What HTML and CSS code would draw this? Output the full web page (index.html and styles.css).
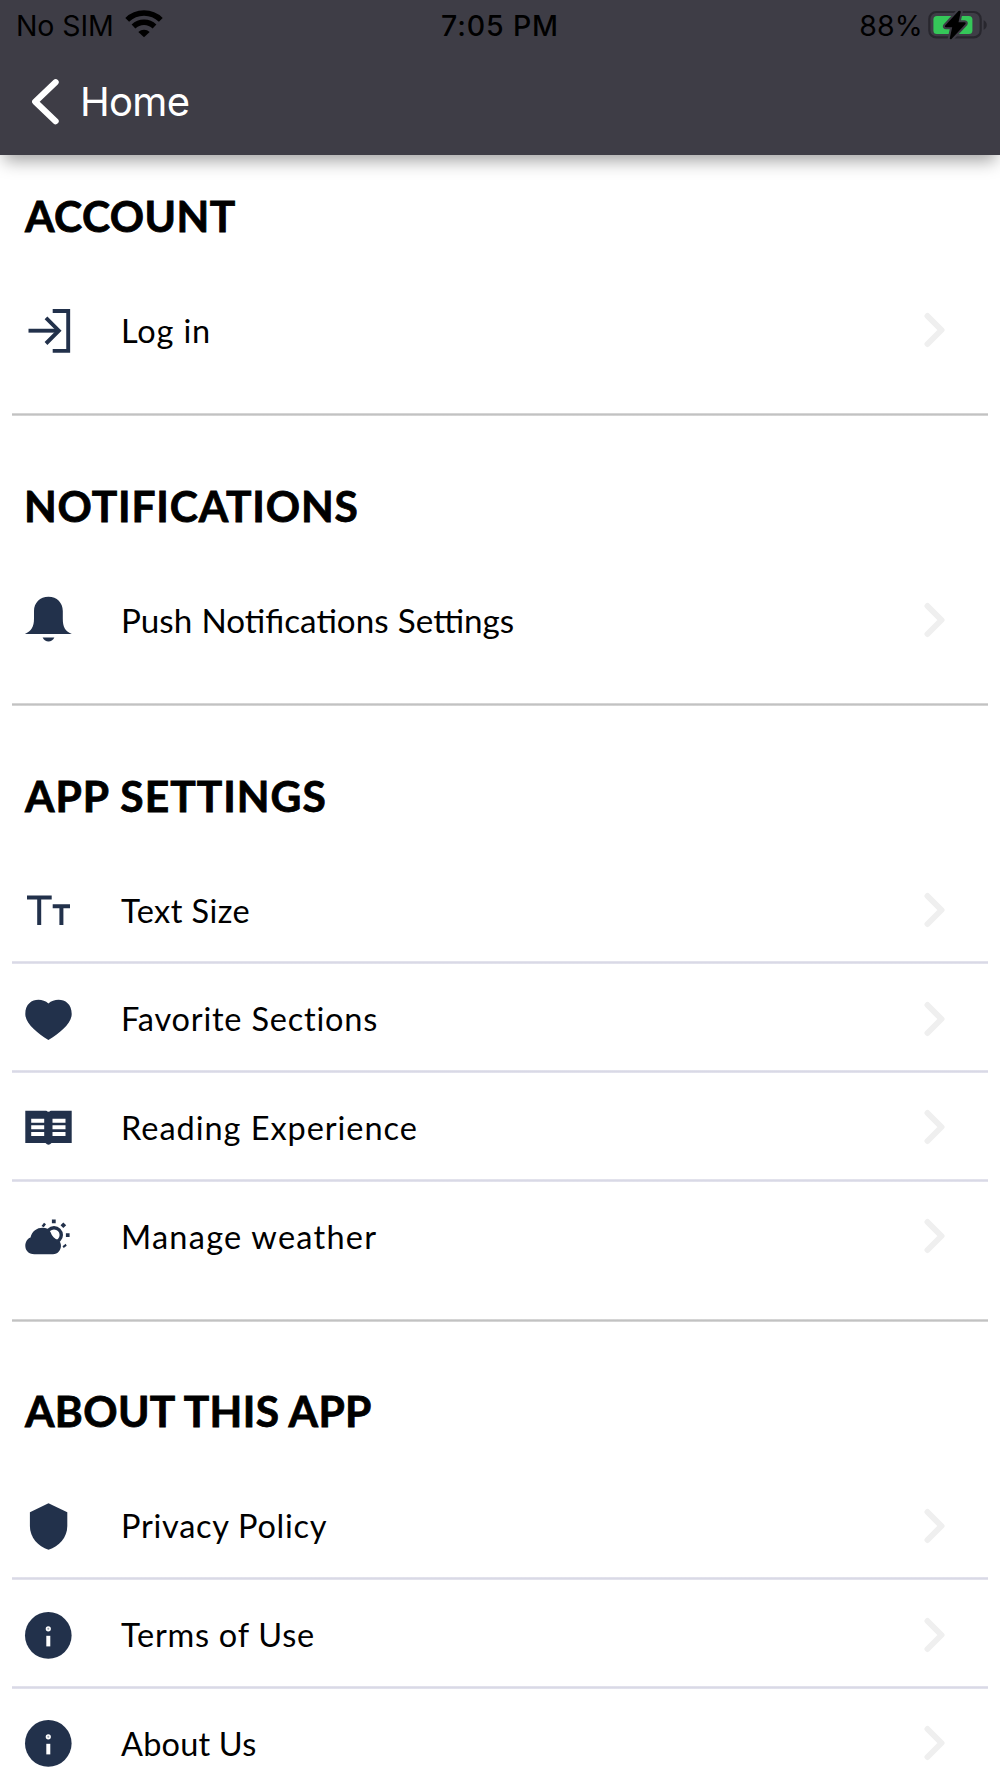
FILE: index.html
```
<!DOCTYPE html>
<html lang="en">
<head>
<meta charset="utf-8">
<title>Settings</title>
<link rel="stylesheet" href="styles.css">
</head>
<body>
<svg class="defs" width="0" height="0" aria-hidden="true">
  <symbol id="chevron" viewBox="0 0 22 36"><path d="M3.5 4 17.500 18 3.5 32" fill="none" stroke="#efefef" stroke-width="6" stroke-linecap="round" stroke-linejoin="round"/></symbol>
  <symbol id="info" viewBox="0 0 48 48"><circle cx="24.3" cy="24.4" r="23.3"/><circle cx="24.3" cy="17.8" r="1.8" fill="#9aa3b0" stroke="#fff" stroke-width="1.6"/><path fill="#fff" d="M22.3 24.8h4v10.6h-4z"/></symbol>
</svg>

<header class="header">
  <div class="status">
    <div class="carrier">
      <span class="no-sim">No SIM</span>
      <svg class="wifi" width="38" height="28" viewBox="0 0 38 28"><g fill="none" stroke="#000" stroke-width="5.4"><path d="M2.2 9.9a24 24 0 0 1 33.6 0"/><path d="M8.5 16.5a15 15 0 0 1 21 0"/></g><path d="M19 27.300 13.3 22a8.4 8.4 0 0 1 11.4 0z"/></svg>
    </div>
    <span class="time">7:05 PM</span>
    <div class="power">
      <span class="percent">88%</span>
      <svg class="battery" width="60" height="30" viewBox="0 0 60 30">
        <rect x="1.3" y="2" width="51.4" height="25.4" rx="7" fill="none" stroke="#28272e" stroke-width="2.2"/>
        <path d="M55.6 10.3c4.2 1.6 4.2 7.9 0 9.5z" fill="#28272e"/>
        <rect x="5.4" y="6" width="39" height="18" rx="3.5" fill="#35c759"/>
        <path id="bolt" d="M30.5 1 17 15.8q-.6 1.4 1 1.4h6.200l-2.500 11.3q.6 1.3 1.8.5L37.500 14q.9-1.6-1-1.8h-6L32.800 1.8Q32 0 30.5 1z" stroke="#3e3d46" stroke-width="4" paint-order="stroke"/>
      </svg>
    </div>
  </div>
  <nav class="nav">
    <svg width="28" height="48" viewBox="0 0 28 48"><path d="M24.6 4.2 4.2 23.700 24.6 43.200" fill="none" stroke="#fff" stroke-width="6.200" stroke-linecap="round" stroke-linejoin="round"/></svg>
    <span class="home">Home</span>
  </nav>
</header>

<main class="settings">
  <section class="section">
    <h2 class="title t-account">ACCOUNT</h2>
    <div class="row">
      <svg class="icon" viewBox="0 0 48 48"><g fill="none" stroke="#22314b" stroke-width="3.9"><path d="M28.7 5H44.2V44.9H28.7"/><path d="M4.5 24.7H34" /><path d="M22 11.9 34.8 24.7 22 37.5"/></g></svg>
      <span class="label l-login">Log in</span>
      <svg class="chevron"><use href="#chevron"/></svg>
    </div>
  </section>

  <section class="section">
    <h2 class="title t-notifications">NOTIFICATIONS</h2>
    <div class="row">
      <svg class="icon" viewBox="0 0 48 48"><path d="M24.5.7C33 .7 38.8 6.7 38.8 15v7.5c0 8.5 2 12.5 9 15.5H.9c6.5-3 9.1-7 9.1-15.500V15C10 6.7 16 .7 24.5.7zM18.6 41.400H30.400c-2.500 5.300-9.300 5.300-11.800 0z"/></svg>
      <span class="label l-push">Push Notifications Settings</span>
      <svg class="chevron"><use href="#chevron"/></svg>
    </div>
  </section>

  <section class="section">
    <h2 class="title t-app">APP SETTINGS</h2>
    <div class="row">
      <svg class="icon" viewBox="0 0 48 48"><g fill="none" stroke="#22314b" stroke-width="4"><path d="M3 11.5H27.7M15.2 11.5V39"/><path d="M28.7 20.2H46M37.4 20.2V39"/></g></svg>
      <span class="label l-text">Text Size</span>
      <svg class="chevron"><use href="#chevron"/></svg>
    </div>
    <div class="row">
      <svg class="icon" viewBox="0 0 48 48"><path d="M24.4 8.400C32 1.8 47.7 3.5 47.7 19 47.7 28.5 36 38 24.4 45 13 38 1.3 28.5 1.3 19 1.3 3.5 17 1.8 24.4 8.4z"/></svg>
      <span class="label l-favorite">Favorite Sections</span>
      <svg class="chevron"><use href="#chevron"/></svg>
    </div>
    <div class="row">
      <svg class="icon" viewBox="0 0 48 48"><path d="M1.3 7.700H22.3q2.2 2 4.4 0H47.7V40H27.5q-3 3.3-6 0H1.3z"/><path d="M7.2 17.7h13M28.5 17.7h13M7.2 24.3h13M28.5 24.3h13M7.2 31h13M28.5 31h13" stroke="#fff" stroke-width="4"/></svg>
      <span class="label l-reading">Reading Experience</span>
      <svg class="chevron"><use href="#chevron"/></svg>
    </div>
    <div class="row">
      <svg class="icon" viewBox="0 0 48 48"><circle cx="30" cy="23" r="7.3" fill="#fff" stroke="#22314b" stroke-width="3.400"/><path d="M10.5 42.300C-1 42.300-1 28.500 6.500 25.500 8 19 13 15.700 18.500 15.700c4 0 6.500 1.500 8 4.300 1.500 4.500 4 7 8 8 5 4.500 2 14.300-5.500 14.300z"/><path d="M27.900 7.400h3.800v3.800h-3.800zM41.900 21.200h3.700v3.700h-3.700zM39.300 10.500 42.200 13.300 39.300 16.100 36.500 13.300zM17.500 14 20 10.800 22 12.200 19.800 15.200zM38.500 34.200 41.700 31.700 42.700 33.700 39.700 36z"/></svg>
      <span class="label l-weather">Manage weather</span>
      <svg class="chevron"><use href="#chevron"/></svg>
    </div>
  </section>

  <section class="section">
    <h2 class="title t-about">ABOUT THIS APP</h2>
    <div class="row">
      <svg class="icon" viewBox="0 0 48 48"><path d="M24.5 1.300 43.300 10.200V24C43.300 35.500 35 44.500 24.500 47.800 14 44.500 5.900 35.500 5.900 24V10.200z"/></svg>
      <span class="label l-privacy">Privacy Policy</span>
      <svg class="chevron"><use href="#chevron"/></svg>
    </div>
    <div class="row">
      <svg class="icon"><use href="#info"/></svg>
      <span class="label l-terms">Terms of Use</span>
      <svg class="chevron"><use href="#chevron"/></svg>
    </div>
    <div class="row">
      <svg class="icon"><use href="#info"/></svg>
      <span class="label l-us">About Us</span>
      <svg class="chevron"><use href="#chevron"/></svg>
    </div>
  </section>
</main>
</body>
</html>
```
FILE: styles.css
```
* { box-sizing: border-box; }
html { overflow: hidden; }
body { margin: 0; height: 1778px; overflow: hidden; background: #fff; color: #000; font-family: Lato, sans-serif; }
svg { display: block; flex: none; }
.defs { display: none; }

.header { position: relative; height: 155px; background: #3e3d46; font-family: Inter, sans-serif; box-shadow: 0 10px 16px -4px rgba(0, 0, 0, .36); }
.status { display: grid; grid-template-columns: 1fr auto 1fr; height: 51px; padding: 0 12px 0 16px; font-size: 28.5px; line-height: 51px; }
.carrier, .power { display: flex; align-items: flex-start; }
.power { justify-content: flex-end; }
.no-sim { letter-spacing: -.1px; }
.wifi { margin: 10px 0 0 11px; }
.time { margin-left: -4px; font-weight: 500; letter-spacing: .85px; }
.percent { letter-spacing: .2px; }
.battery { margin: 9.5px 0 0 5px; }
.nav { display: flex; align-items: center; height: 101px; padding-left: 31px; font-size: 40px; color: #fff; }
.home { margin-left: 21px; letter-spacing: -.7px; }

.settings { margin-top: -29px; }
.section { margin: 0 12px; padding-bottom: 31.500px; background: linear-gradient(#dedede, #c2c2c2 50%, #dedede) bottom / 100% 3px no-repeat; }
.title { margin: 0; height: 149.800px; padding: 63.600px 0 0 13px; font-size: 42.500px; line-height: 51px; font-weight: 700; white-space: nowrap; -webkit-text-stroke: .8px #000; }
.row { display: flex; align-items: center; height: 108.670px; padding: 0 42px 0 12px; background: linear-gradient(#e6e6ef, #d9d9e6 50%, #e6e6ef) bottom / 100% 3px no-repeat; }
.row:last-child { background: none; }
.icon { width: 48px; height: 48px; fill: #22314b; }
.label { flex: 1; margin-left: 49px; padding-top: 1px; font-size: 32.500px; line-height: 40px; white-space: nowrap; }
.chevron { width: 22px; height: 36px; }

.t-account { letter-spacing: .42px; }
.t-notifications { letter-spacing: .82px; padding-left: 12px; }
.t-app { letter-spacing: 1.020px; }
.t-about { letter-spacing: .350px; }
.l-login { letter-spacing: .85px; }
.l-push { padding-top: 0; font-size: 33.200px; word-spacing: .8px; }
.l-text { letter-spacing: .45px; }
.l-favorite { letter-spacing: .79px; }
.l-reading { letter-spacing: .96px; }
.l-weather { letter-spacing: 1.250px; }
.l-privacy { letter-spacing: .73px; }
.l-terms { letter-spacing: .75px; }
.l-us { letter-spacing: .2px; }
```
